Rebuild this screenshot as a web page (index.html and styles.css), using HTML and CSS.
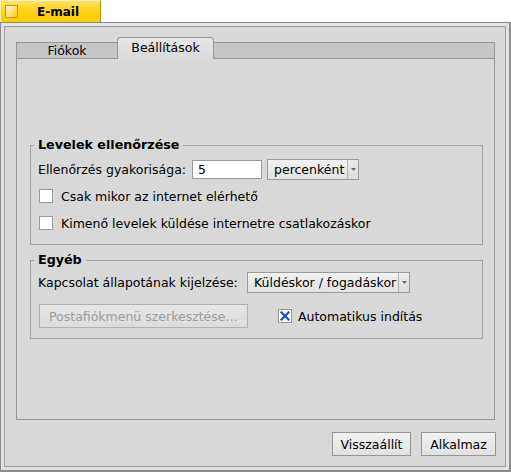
FILE: index.html
```html
<!DOCTYPE html>
<html>
<head>
<meta charset="utf-8">
<link rel="stylesheet" href="styles.css">
</head>
<body>
<div class="wtab"><span class="closebox"></span><span class="wtitle">E-mail</span></div>
<div class="window">
  <div class="content">
    <div class="tabview">
      <div class="tabbar">
        <div class="tabitem">Fiókok</div>
        <div class="tabitem active">Beállítások</div>
        <div class="tabfill"></div>
      </div>
      <div class="panel">
        <fieldset class="group g1">
          <legend>Levelek ellenőrzése</legend>
          <div class="row r1">
            <span class="lbl lbl1">Ellenőrzés gyakorisága:</span>
            <span class="input">5</span>
            <span class="menu m1"><span class="mtext">percenként</span><span class="marrow"><svg width="5" height="3" viewBox="0 0 5 3"><path d="M0 0h5L2.5 3z" fill="#6a6a6a"/></svg></span></span>
          </div>
          <div class="check c1"><span class="box"></span><span class="ctext">Csak mikor az internet elérhető</span></div>
          <div class="check c2"><span class="box"></span><span class="ctext">Kimenő levelek küldése internetre csatlakozáskor</span></div>
        </fieldset>
        <fieldset class="group g2">
          <legend>Egyéb</legend>
          <div class="row ra">
            <span class="lbl lbl2">Kapcsolat állapotának kijelzése:</span>
            <span class="menu m2"><span class="mtext">Küldéskor / fogadáskor</span><span class="marrow"><svg width="5" height="3" viewBox="0 0 5 3"><path d="M0 0h5L2.5 3z" fill="#6a6a6a"/></svg></span></span>
          </div>
          <div class="row rb">
            <span class="btn disabled wide">Postafiókmenü szerkesztése…</span>
            <span class="check c3"><span class="box checked"><svg width="12" height="12" viewBox="0 0 12 12"><path d="M2.5 2.5L9.5 9.5M9.5 2.5L2.5 9.5" stroke="#1f4fc8" stroke-width="2.2" stroke-linecap="square"/></svg></span><span class="ctext">Automatikus indítás</span></span>
          </div>
        </fieldset>
      </div>
    </div>
    <div class="buttons">
      <span class="btn b1">Visszaállít</span>
      <span class="btn b2">Alkalmaz</span>
    </div>
  </div>
</div>
</body>
</html>
```
FILE: styles.css
```css
* { box-sizing: border-box; }
html, body { margin: 0; padding: 0; }
body {
  background: #ffffff;
  width: 511px;
  height: 472px;
  overflow: hidden;
  font-family: "DejaVu Sans", "Liberation Sans", sans-serif;
  font-size: 12.5px;
  color: #000;
}

/* window title tab */
.wtab {
  width: 101px;
  height: 22px;
  background: linear-gradient(#ffe45e, #ffd21a 45%, #ffcb00);
  border-top: 1px solid #fff1a6;
  border-left: 1px solid #fff1a6;
  border-right: 1px solid #b89300;
  display: flex;
  align-items: center;
}
.closebox {
  width: 13px;
  height: 13px;
  margin-left: 4px;
  border: 1px solid #c39c00;
  background: linear-gradient(135deg, #fffbe6 0%, #ffe680 45%, #ffcb00 100%);
}
.wtitle {
  margin-left: 19px;
  font-weight: bold;
  font-size: 12px;
  line-height: 14px;
}

/* window frame */
.window {
  width: 511px;
  height: 450px;
  border: 1px solid #8a8a8a;
  border-right-width: 2px;
  border-bottom-width: 2px;
  padding: 3px;
  background: #e2e2e2;
}
.content {
  height: 100%;
  border: 1px solid #9c9c9c;
  background: #d8d8d8;
  padding: 10px 10px 0 11px;
  display: flex;
  flex-direction: column;
}

/* tab view */
.tabview {
  height: 383px;
  display: flex;
  flex-direction: column;
}
.tabbar {
  height: 22px;
  display: flex;
  align-items: flex-end;
}
.tabitem {
  width: 101px;
  height: 17px;
  background: #c6c6c6;
  border-top: 1px solid #979797;
  border-left: 1px solid #979797;
  border-bottom: 1px solid #979797;
  text-align: center;
  line-height: 16px;
}
.tabitem.active {
  width: 97px;
  height: 22px;
  background: linear-gradient(#e6e6e6, #dadada);
  border: 1px solid #979797;
  border-bottom: none;
  border-radius: 4px 4px 0 0;
  line-height: 20px;
}
.tabfill {
  flex: 1;
  height: 17px;
  background: #c6c6c6;
  border-top: 1px solid #979797;
  border-right: 1px solid #979797;
  border-bottom: 1px solid #979797;
}
.panel {
  flex: 1;
  border: 1px solid #979797;
  border-top: none;
  padding: 0 11px 0 13px;
  display: flex;
  flex-direction: column;
}

/* group boxes */
.group {
  margin: 0;
  min-width: 0;
  border: 1px solid #a2a2a2;
  padding: 0 0 11px 3px;
}
.group legend {
  padding: 0 4px;
  font-weight: bold;
  font-size: 12.7px;
  line-height: 14px;
}
.g1 { margin-top: 79px; }
.g2 { margin-top: 8px; padding-bottom: 10px; }

.row {
  display: flex;
  align-items: center;
  margin-left: 4px;
}
.r1 { height: 22px; margin-top: 6px; }
.ra { height: 21px; margin-top: 5px; }
.rb { height: 24px; margin-top: 11px; margin-left: 5px; }
.lbl { flex: none; white-space: nowrap; }
.lbl1 { width: 154px; }
.lbl2 { width: 209px; }

.input {
  width: 70px;
  height: 19px;
  border: 1px solid #9a9a9a;
  background: #fff;
  padding-left: 5px;
  line-height: 17px;
}
.menu {
  display: flex;
  height: 21px;
  border: 1px solid #9a9a9a;
  background: linear-gradient(#f2f2f2, #e2e2e2);
}
.m1 { width: 92px; margin-left: 5px; }
.m2 { width: 163px; }
.mtext {
  flex: 1;
  padding-left: 6px;
  line-height: 19px;
  white-space: nowrap;
  overflow: hidden;
}
.marrow {
  width: 11px;
  flex: none;
  border-left: 1px solid #b4b4b4;
  background: linear-gradient(#ececec, #dcdcdc);
  display: flex;
  align-items: center;
  justify-content: center;
}
.marrow svg { display: block; }

/* checkboxes */
.check {
  display: flex;
  align-items: center;
  height: 20px;
  margin-left: 5px;
}
.c1 { margin-top: 6px; }
.c2 { margin-top: 7px; }
.c3 { margin-left: 30px; height: 24px; }
.box {
  width: 14px;
  height: 14px;
  flex: none;
  border: 1px solid #9a9a9a;
  background: #fff;
  display: flex;
  align-items: center;
  justify-content: center;
}
.box svg { display: block; }
.ctext { margin-left: 8px; white-space: nowrap; }
.c3 .ctext { margin-left: 6px; }

/* buttons */
.btn {
  display: flex;
  align-items: center;
  justify-content: center;
  height: 24px;
  border: 1px solid #959595;
  background: linear-gradient(#f3f3f3, #e0e0e0);
  white-space: nowrap;
}
.btn.disabled {
  color: #9c9c9c;
  border-color: #b2b2b2;
  background: linear-gradient(#e6e6e6, #dcdcdc);
}
.wide { width: 209px; }
.buttons {
  display: flex;
  justify-content: flex-end;
  gap: 10px;
  margin-top: 12px;
  margin-right: -1px;
}
.b1 { width: 79px; }
.b2 { width: 75px; }
```
